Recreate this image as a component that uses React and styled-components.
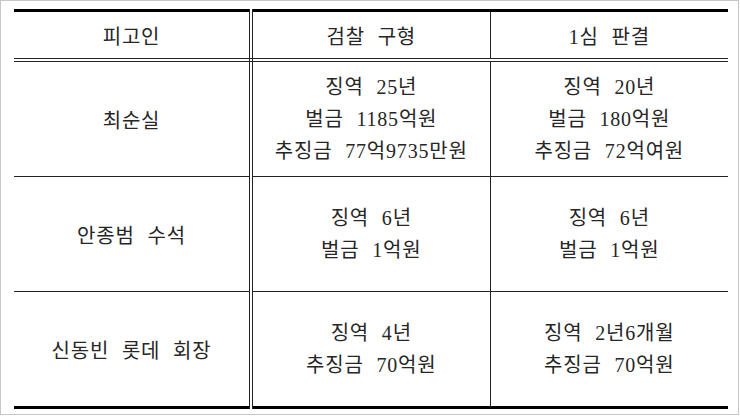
import styled, { createGlobalStyle } from "styled-components";

const GlobalStyle = createGlobalStyle`
  html, body {
    margin: 0;
    padding: 0;
    background: #ffffff;
  }
`;

const rows = [
  {
    name: "최순실",
    demand: ["징역 25년", "벌금 1185억원", "추징금 77억9735만원"],
    verdict: ["징역 20년", "벌금 180억원", "추징금 72억여원"],
  },
  {
    name: "안종범 수석",
    demand: ["징역 6년", "벌금 1억원"],
    verdict: ["징역 6년", "벌금 1억원"],
  },
  {
    name: "신동빈 롯데 회장",
    demand: ["징역 4년", "추징금 70억원"],
    verdict: ["징역 2년6개월", "추징금 70억원"],
  },
];

const App = () => {
  return (
    <Frame>
      <GlobalStyle />
      <Table>
        <colgroup>
          <col style={{ width: 237 }} />
          <col style={{ width: 239 }} />
          <col style={{ width: 238 }} />
        </colgroup>
        <thead>
          <tr>
            <HeadCell $first>피고인</HeadCell>
            <HeadCell>검찰 구형</HeadCell>
            <HeadCell>1심 판결</HeadCell>
          </tr>
        </thead>
        <tbody>
          {rows.map((row) => (
            <tr key={row.name}>
              <Cell $first>{row.name}</Cell>
              <Cell>
                {row.demand.map((line) => (
                  <Line key={line}>{line}</Line>
                ))}
              </Cell>
              <Cell>
                {row.verdict.map((line) => (
                  <Line key={line}>{line}</Line>
                ))}
              </Cell>
            </tr>
          ))}
        </tbody>
      </Table>
    </Frame>
  );
};

const Frame = styled.div`
  box-sizing: border-box;
  width: 739px;
  height: 415px;
  padding: 8px 0 0 13px;
  border: 1px solid #c6c6c6;
  background: #ffffff;
`;

const Table = styled.table`
  width: 714px;
  border-collapse: collapse;
  table-layout: fixed;
  border-top: 3px solid #000;
  border-bottom: 3px solid #000;
  color: #262626;
  font-family: "Liberation Serif", "Noto Sans CJK KR", sans-serif;
  font-size: 20px;
  letter-spacing: 0.8px;
  word-spacing: 7px;
`;

const HeadCell = styled.th`
  height: 46px;
  padding: 0;
  font-weight: 400;
  text-align: center;
  vertical-align: middle;
  border-bottom: 4px double #222;
  border-right: ${(p) => (p.$first ? "4px double #222" : "1px solid #222")};

  &:last-child {
    border-right: none;
  }
`;

const Cell = styled.td`
  height: 114px;
  padding: 0;
  text-align: center;
  vertical-align: middle;
  border-bottom: 1px solid #222;
  border-right: ${(p) => (p.$first ? "4px double #222" : "1px solid #222")};

  &:last-child {
    border-right: none;
  }

  tr:last-child > & {
    border-bottom: none;
  }
`;

const Line = styled.div`
  line-height: 32px;
`;

export default App;
